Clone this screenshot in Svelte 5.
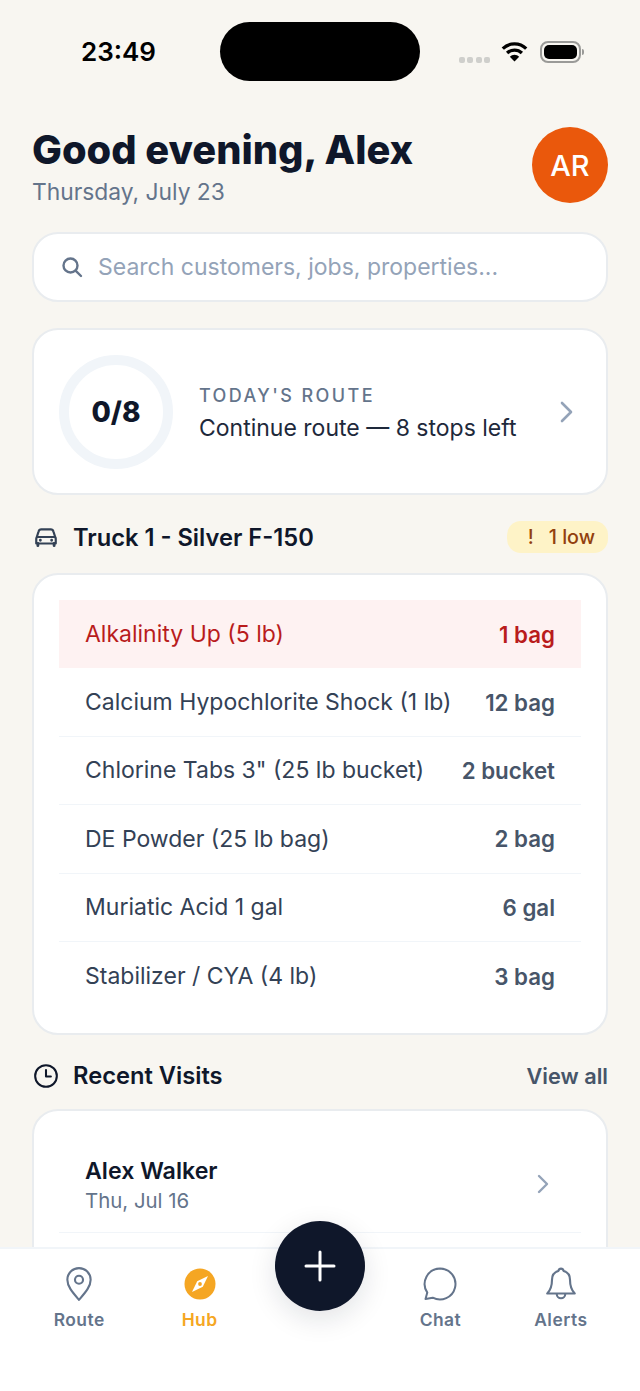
<script>
  const stock = [
    { name: "Alkalinity Up (5 lb)", qty: "1 bag", low: true },
    { name: "Calcium Hypochlorite Shock (1 lb)", qty: "12 bag" },
    { name: "Chlorine Tabs 3\" (25 lb bucket)", qty: "2 bucket" },
    { name: "DE Powder (25 lb bag)", qty: "2 bag" },
    { name: "Muriatic Acid 1 gal", qty: "6 gal" },
    { name: "Stabilizer / CYA (4 lb)", qty: "3 bag" },
  ];
</script>

<div class="screen">
  <div class="status">
    <span class="time">23:49</span>
    <div class="island"></div>
    <div class="indicators">
      <span class="dots"><i></i><i></i><i></i><i></i></span>
      <svg class="wifi" width="27" height="21" viewBox="0 0 27 21">
        <path d="M1.8 7.6a16.8 16.8 0 0 1 23.4 0M6.1 12a10.8 10.8 0 0 1 14.8 0" fill="none" stroke="#000" stroke-width="3.3" />
        <path d="M8.8 15.8a6.7 6.7 0 0 1 9.4 0l-4.7 4.8z" fill="#000" />
      </svg>
      <span class="battery"><b></b></span>
      <span class="nub"></span>
    </div>
  </div>

  <main>
    <header>
      <div class="greeting">
        <h1>Good evening, Alex</h1>
        <p class="date">Thursday, July 23</p>
      </div>
      <div class="avatar">AR</div>
    </header>

    <div class="search card">
      <svg width="24" height="24" viewBox="0 0 24 24" fill="none" stroke="#64748b" stroke-width="2.4" stroke-linecap="round">
        <circle cx="10.5" cy="10.5" r="7" /><path d="M15.8 15.8 21 21" />
      </svg>
      <span>Search customers, jobs, properties...</span>
    </div>

    <div class="route card">
      <div class="ring">0/8</div>
      <div class="route-text">
        <div class="eyebrow">TODAY'S ROUTE</div>
        <div class="route-line">Continue route — 8 stops left</div>
      </div>
      <svg class="chev" width="16" height="24" viewBox="0 0 16 24" fill="none" stroke="#94a3b8" stroke-width="2.6" stroke-linecap="round" stroke-linejoin="round">
        <path d="m3 3 9 9-9 9" />
      </svg>
    </div>

    <div class="section truck">
      <div class="section-title">
        <svg width="26" height="26" viewBox="0 0 24 24" fill="none" stroke="#334155" stroke-width="2" stroke-linecap="round" stroke-linejoin="round">
          <path d="M3.5 12 5.2 6.8A2.5 2.5 0 0 1 7.6 5h8.800a2.5 2.5 0 0 1 2.4 1.800l1.700 5.200" />
          <path d="M3 13.5A1.5 1.5 0 0 1 4.5 12h15a1.5 1.5 0 0 1 1.5 1.5V18H3z" />
          <path d="M4.5 18v2M19.5 18v2" stroke-width="2.6" />
          <path d="M6.8 15h.01M17.2 15h.01" stroke-width="2.6" />
        </svg>
        <span>Truck 1 - Silver F-150</span>
      </div>
      <div class="badge"><span class="bang">!</span>1 low</div>
    </div>

    <div class="stock card">
      {#each stock as item}
        <div class="stock-row" class:low={item.low}>
          <span>{item.name}</span>
          <b>{item.qty}</b>
        </div>
      {/each}
    </div>

    <div class="section visits">
      <div class="section-title">
        <svg width="26" height="26" viewBox="0 0 24 24" fill="none" stroke="#0f172a" stroke-width="1.9" stroke-linecap="round" stroke-linejoin="round">
          <circle cx="12" cy="12" r="10" /><path d="M12 6.5V12.5h4.5" />
        </svg>
        <span>Recent Visits</span>
      </div>
      <span class="view-all">View all</span>
    </div>

    <div class="recent card">
      <div class="visit">
        <div class="visit-text">
          <div class="visit-name">Alex Walker</div>
          <div class="visit-date">Thu, Jul 16</div>
        </div>
        <svg width="14" height="22" viewBox="0 0 14 22" fill="none" stroke="#94a3b8" stroke-width="2.4" stroke-linecap="round" stroke-linejoin="round">
          <path d="m3 3 8 8-8 8" />
        </svg>
      </div>
    </div>
  </main>

  <nav>
    <div class="tab">
      <svg width="34" height="36" viewBox="0 0 28 34" fill="none" stroke="#64748b" stroke-width="2" stroke-linejoin="round">
        <path d="M14 32C8 25 3 19.5 3 13a11 11 0 0 1 22 0c0 6.5-5 12-11 19z" />
        <circle cx="14" cy="13" r="3.8" />
      </svg>
      <span>Route</span>
    </div>
    <div class="tab active">
      <svg width="34" height="36" viewBox="0 0 34 34">
        <circle cx="17" cy="17" r="15.5" fill="#f5a623" />
        <path d="M25 9 19.8 19.8 9 25l5.200-10.800z" fill="#fff" />
        <circle cx="17" cy="17" r="1.9" fill="#f5a623" />
      </svg>
      <span>Hub</span>
    </div>
    <div class="tab spacer"></div>
    <div class="tab">
      <svg width="36" height="36" viewBox="0 0 36 36" fill="none" stroke="#64748b" stroke-width="2" stroke-linejoin="round">
        <path d="M18 2.5a15.5 15.5 0 1 1-7.300 29.200L3.500 33l1.800-6.400A15.500 15.500 0 0 1 18 2.500z" />
      </svg>
      <span>Chat</span>
    </div>
    <div class="tab">
      <svg width="32" height="36" viewBox="0 0 30 34" fill="none" stroke="#64748b" stroke-width="2" stroke-linecap="round" stroke-linejoin="round">
        <path d="M15 2.500c-1.400 0-2.200 1-2.500 2.200C8.800 5.800 6.500 9 6.500 13c0 6-1 9.500-4.500 13h26c-3.500-3.500-4.500-7-4.500-13 0-4-2.300-7.200-6-8.300-.3-1.200-1.100-2.200-2.500-2.200z" />
        <path d="M11 26.500a4 4 0 0 0 8 0" />
      </svg>
      <span>Alerts</span>
    </div>
    <button class="fab" aria-label="Add">
      <svg width="34" height="34" viewBox="0 0 34 34" stroke="#fff" stroke-width="3" stroke-linecap="round">
        <path d="M17 3v28M3 17h28" />
      </svg>
    </button>
  </nav>
</div>

<style>
  :global(body) {
    margin: 0;
    background: #f8f6f1;
  }
  .screen {
    display: flex;
    flex-direction: column;
    width: 640px;
    height: 1391px;
    overflow: hidden;
    background: #f8f6f1;
    font-family: Inter, "Noto Sans", sans-serif;
    color: #0f172a;
  }

  /* status bar */
  .status {
    flex: none;
    height: 103px;
    position: relative;
    display: flex;
    justify-content: space-between;
  }
  .time {
    margin: 36px 0 0 81px;
    font-size: 26px;
    line-height: 32px;
    font-weight: 600;
    color: #000;
  }
  .island {
    position: absolute;
    left: 220px;
    top: 22px;
    width: 200px;
    height: 59px;
    border-radius: 30px;
    background: #000;
  }
  .indicators {
    display: flex;
    align-items: center;
    height: 21px;
    margin: 41px 56px 0 0;
  }
  .dots {
    display: flex;
    gap: 2.5px;
    align-self: flex-start;
    margin: 16px 11px 0 0;
  }
  .dots i {
    width: 6px;
    height: 6px;
    border-radius: 2px;
    background: #cfcfcc;
  }
  .battery {
    box-sizing: border-box;
    width: 41px;
    height: 22px;
    margin-left: 12px;
    padding: 2px;
    border: 2px solid #9a9a98;
    border-radius: 8px;
  }
  .battery b {
    display: block;
    height: 100%;
    border-radius: 5px;
    background: #000;
  }
  .nub {
    width: 2px;
    height: 6px;
    margin-left: 1px;
    border-radius: 0 2px 2px 0;
    background: #9a9a98;
  }

  main {
    flex: 1;
    min-height: 0;
    overflow: hidden;
    padding: 0 32px;
  }
  .card {
    box-sizing: border-box;
    background: #fff;
    border: 2px solid #e9ecef;
    border-radius: 26px;
  }

  header {
    display: flex;
    justify-content: space-between;
    align-items: center;
    height: 100px;
    margin-top: 12px;
  }
  .greeting {
    padding-top: 3px;
  }
  h1 {
    margin: 0;
    font-size: 39.8px;
    line-height: 48px;
    font-weight: 800;
  }
  .date {
    margin: 3px 0 0;
    font-size: 22.8px;
    line-height: 30px;
    color: #64748b;
  }
  .avatar {
    display: flex;
    align-items: center;
    justify-content: center;
    width: 76px;
    height: 76px;
    border-radius: 50%;
    background: #ea580c;
    color: #fff;
    font-size: 29px;
    font-weight: 500;
  }

  .search {
    display: flex;
    align-items: center;
    gap: 14px;
    height: 70px;
    margin-top: 17px;
    padding: 0 26px;
    font-size: 23px;
    color: #94a3b8;
  }

  .route {
    display: flex;
    align-items: center;
    height: 167px;
    margin-top: 26px;
    padding: 0 31px 0 25px;
  }
  .ring {
    box-sizing: border-box;
    display: flex;
    flex: none;
    align-items: center;
    justify-content: center;
    width: 114px;
    height: 114px;
    border: 10px solid #f1f5f9;
    border-radius: 50%;
    font-size: 28px;
    font-weight: 800;
  }
  .route-text {
    flex: 1;
    margin-left: 26px;
    padding-top: 3px;
  }
  .eyebrow {
    font-size: 18px;
    line-height: 26px;
    font-weight: 500;
    letter-spacing: 2.4px;
    color: #64748b;
  }
  .route-line {
    margin-top: 3px;
    font-size: 23px;
    line-height: 32px;
    color: #1e293b;
  }

  .section {
    display: flex;
    align-items: center;
    justify-content: space-between;
  }
  .section-title {
    display: flex;
    align-items: center;
    gap: 14px;
    font-size: 23.7px;
    font-weight: 600;
  }
  .section-title svg {
    margin-left: 1px;
  }
  .truck {
    height: 32px;
    margin-top: 26px;
  }
  .badge {
    display: flex;
    align-items: center;
    height: 32px;
    padding: 0 13px 0 21px;
    border-radius: 14px;
    background: #fef3c7;
    color: #92400e;
    font-size: 19.7px;
    font-weight: 500;
  }
  .bang {
    margin-right: 15px;
  }

  .stock {
    margin-top: 20px;
    padding: 25px 25px 22.6px;
  }
  .stock-row {
    display: flex;
    align-items: center;
    justify-content: space-between;
    box-sizing: border-box;
    height: 68.4px;
    padding: 0 26px;
    border-bottom: 1px solid #f1f5f9;
    font-size: 23px;
    color: #334155;
  }
  .stock-row:last-child {
    border-bottom: 0;
  }
  .stock-row b {
    font-size: 22.3px;
    font-weight: 600;
    color: #475569;
  }
  .stock-row.low {
    background: #fef2f2;
    color: #b91c1c;
    border-bottom: 0;
  }
  .stock-row.low b {
    color: #b91c1c;
  }

  .visits {
    height: 32px;
    margin-top: 25px;
  }
  .view-all {
    font-size: 21.7px;
    font-weight: 600;
    color: #475569;
  }
  .recent {
    margin-top: 17px;
    height: 300px;
    padding: 25px;
  }
  .visit {
    display: flex;
    align-items: center;
    justify-content: space-between;
    box-sizing: border-box;
    height: 97px;
    padding: 0 31px 0 26px;
    border-bottom: 1px solid #f1f5f9;
  }
  .visit-text {
    padding-top: 2px;
  }
  .visit-name {
    font-size: 23.2px;
    line-height: 30px;
    font-weight: 600;
  }
  .visit-date {
    margin-top: 2px;
    font-size: 20.4px;
    line-height: 26px;
    color: #64748b;
  }

  /* bottom tabs */
  nav {
    flex: none;
    position: relative;
    display: flex;
    justify-content: space-around;
    box-sizing: border-box;
    height: 144px;
    padding: 17px 19px 0;
    background: #fff;
    border-top: 2px solid #f1f5f9;
  }
  .tab {
    display: flex;
    flex: 1;
    flex-direction: column;
    align-items: center;
    gap: 6px;
    font-size: 17.4px;
    line-height: 24px;
    font-weight: 600;
    letter-spacing: 0.5px;
    color: #64748b;
  }
  .tab.active {
    color: #f5a623;
  }
  .fab {
    position: absolute;
    left: 275px;
    top: -28px;
    display: flex;
    align-items: center;
    justify-content: center;
    width: 90px;
    height: 90px;
    padding: 0;
    border: 0;
    border-radius: 50%;
    background: #0f172a;
    box-shadow: 0 8px 28px rgba(15, 23, 42, 0.12);
  }
</style>
